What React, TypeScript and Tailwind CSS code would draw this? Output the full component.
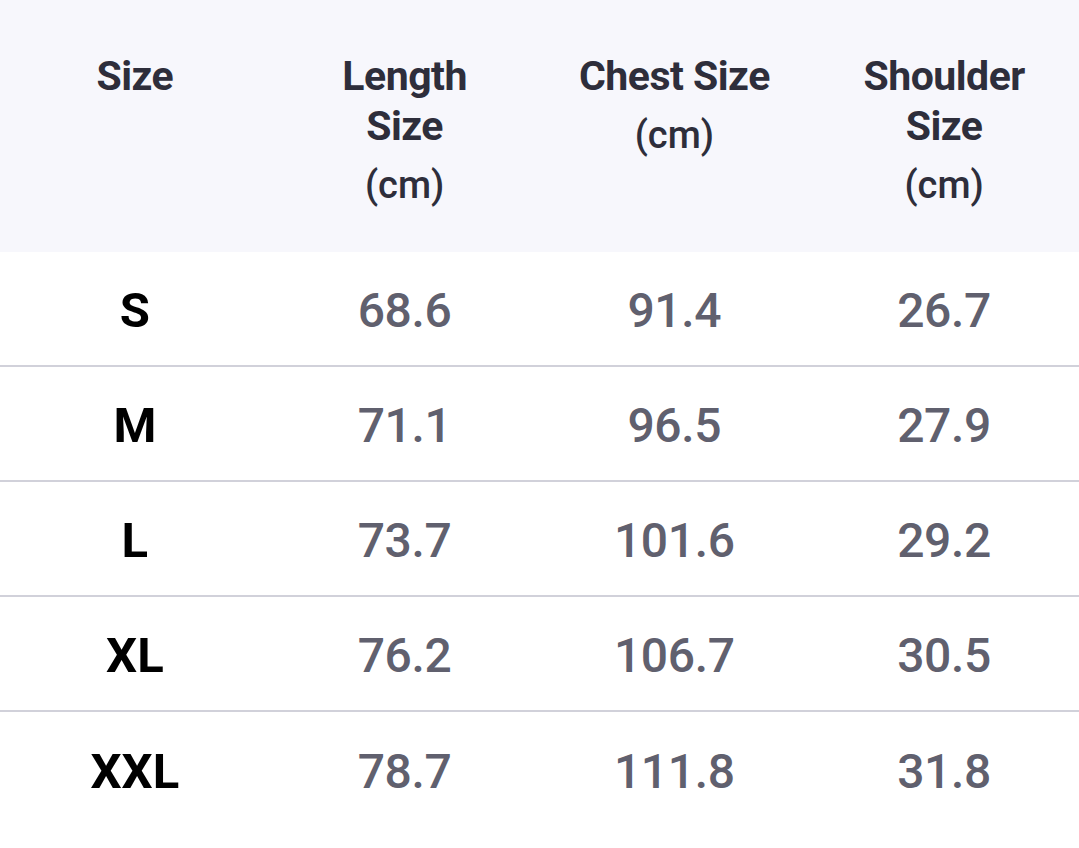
const headers = [
  { title: ["Size"], unit: false },
  { title: ["Length", "Size"], unit: true },
  { title: ["Chest Size"], unit: true },
  { title: ["Shoulder", "Size"], unit: true },
];

const rows = [
  ["S", "68.6", "91.4", "26.7"],
  ["M", "71.1", "96.5", "27.9"],
  ["L", "73.7", "101.6", "29.2"],
  ["XL", "76.2", "106.7", "30.5"],
  ["XXL", "78.7", "111.8", "31.8"],
];

const App = () => {
  return (
    <div className="w-[1079px] h-[848px] bg-white font-['Roboto','Liberation_Sans',sans-serif]">
      {/* header */}
      <div className="grid grid-cols-4 h-[252px] bg-[#f7f7fc] pt-[51px] text-[#2e2e3b]">
        {headers.map((h, i) => (
          <div key={i} className="flex flex-col items-center text-center">
            {h.title.map((line) => (
              <div key={line} className="text-[41px] leading-[50px] font-bold tracking-[-0.5px]">
                {line}
              </div>
            ))}
            {h.unit && (
              <div className="mt-[9px] text-[38px] leading-[50px] font-medium">(cm)</div>
            )}
          </div>
        ))}
      </div>
      {/* rows */}
      {rows.map((r, i) => (
        <div
          key={r[0]}
          className={`grid grid-cols-4 h-[115px] pt-[5px] items-center ${
            i < rows.length - 1 ? "border-b-2 border-[#d1d1da]" : ""
          }`}
        >
          <div className="text-center text-[49px] font-bold text-black">{r[0]}</div>
          {r.slice(1).map((v, j) => (
            <div key={j} className="text-center text-[48px] font-medium text-[#60606e] tracking-[-0.3px]">
              {v}
            </div>
          ))}
        </div>
      ))}
    </div>
  );
};

export default App;
